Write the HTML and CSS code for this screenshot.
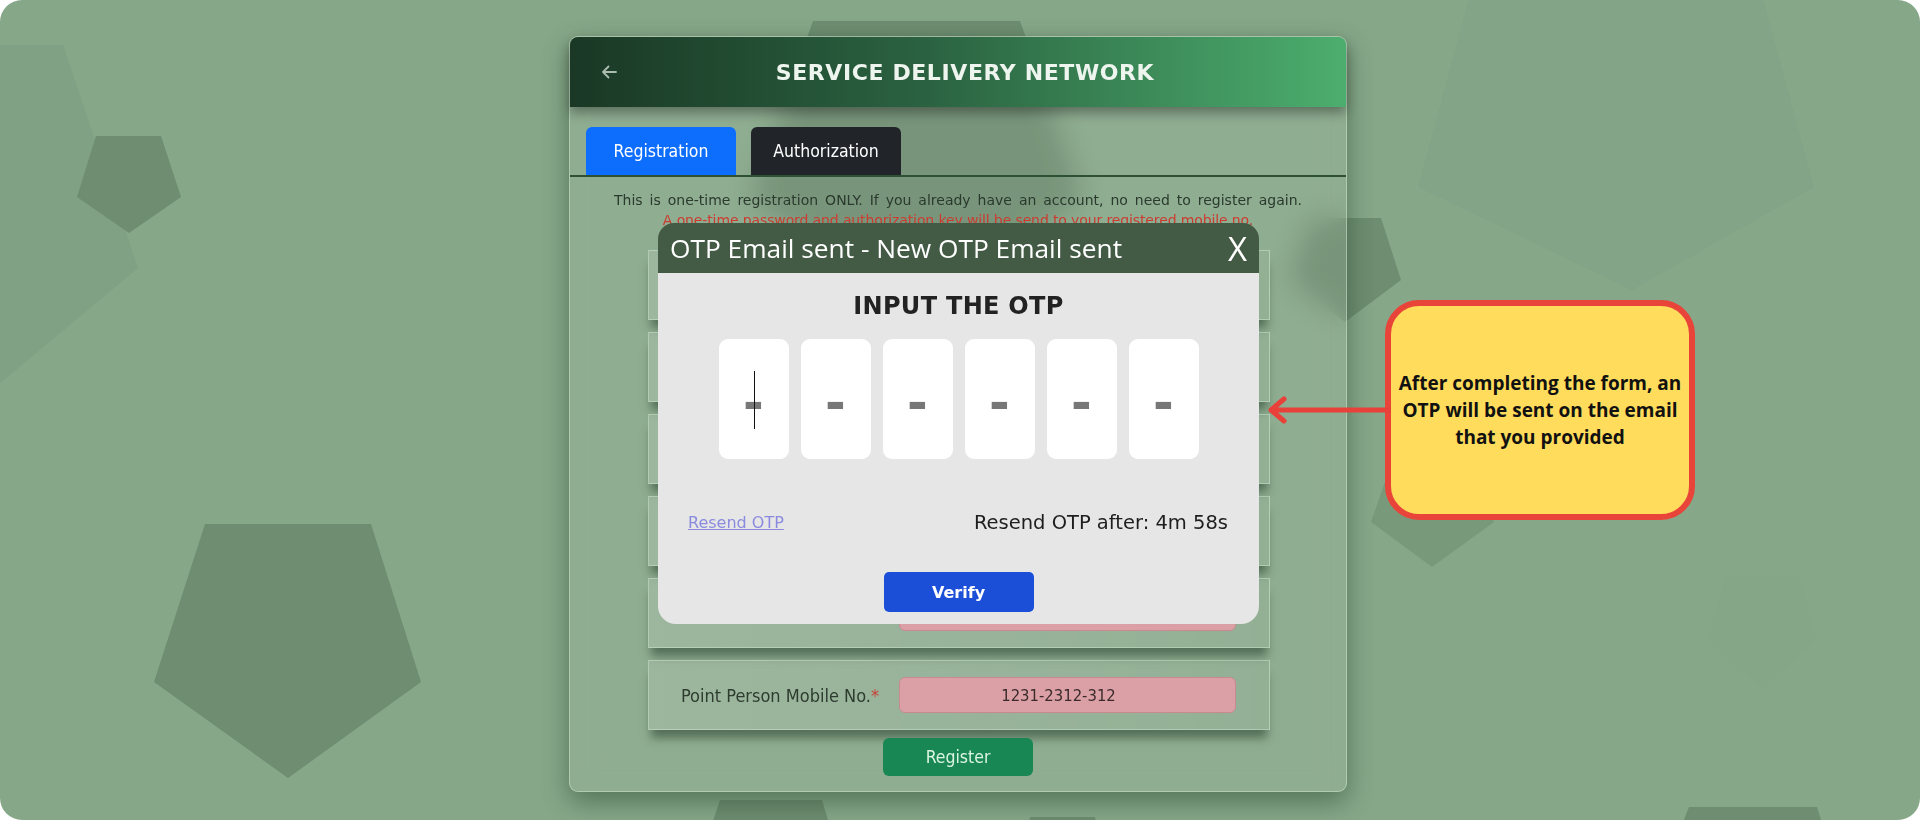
FILE: index.html
```html
<!DOCTYPE html>
<html lang="en">
<head>
<meta charset="utf-8">
<title>Service Delivery Network - OTP</title>
<link rel="stylesheet" href="styles.css">
</head>
<body>
<div class="frame">
  <svg class="bg-shapes" viewBox="0 0 1920 820" aria-hidden="true">
    <polygon class="faint" points="-160,45 63,45 138,268 -20,400 -240,268"/>
    <polygon class="dark" points="96,136 161,136 181,197 129,233 77,197"/>
    <polygon class="dark" points="205,524 371,524 421,682 288,778 154,682"/>
    <polygon class="dark" points="813,21 1020,21 1084,200 916,310 749,200"/>
    <polygon class="dark" points="1311,218 1381,218 1401,280 1345,322 1289,280"/>
    <polygon class="faint2" points="1474,-20 1758,-20 1814,187 1632,290 1418,187"/>
    <polygon class="mid" points="1394,456 1470,456 1494,522 1432,567 1371,522"/>
    <polygon class="faint3" points="1725,577 1800,577 1816,640 1762,690 1708,640"/>
    <polygon class="dark" points="1689,807 1817,807 1840,880 1660,880"/>
    <polygon class="dark" points="1030,817 1095,817 1100,840 1025,840"/>
    <polygon class="dark" points="720,800 822,800 840,860 700,860"/>
  </svg>

  <div class="layout">
    <section class="card">
      <header class="card-head">
        <svg class="back" viewBox="0 0 16 14" aria-hidden="true"><path d="M15 7H2M7.5 1.5 2 7l5.5 5.5"/></svg>
        <h1>SERVICE DELIVERY NETWORK</h1>
      </header>

      <nav class="tabs">
        <button class="tab active">Registration</button>
        <button class="tab dark">Authorization</button>
      </nav>

      <div class="notice">
        <p class="info">This is one-time registration ONLY. If you already have an account, no need to register again.</p>
        <p class="warn">A one-time password and authorization key will be send to your registered mobile no.</p>
      </div>

      <div class="form-panel">
        <div class="row"><label>Organization Name<span class="req">*</span></label><div class="field">Sample Org</div></div>
        <div class="row"><label>Address<span class="req">*</span></label><div class="field">Sample Address</div></div>
        <div class="row"><label>Email Address<span class="req">*</span></label><div class="field">sample@mail.com</div></div>
        <div class="row"><label>Point Person<span class="req">*</span></label><div class="field">Juan Dela Cruz</div></div>
        <div class="row"><label>Position<span class="req">*</span></label><div class="field">Manager</div></div>
        <div class="row"><label>Point Person Mobile No.<span class="req">*</span></label><div class="field">1231-2312-312</div></div>
      </div>

      <div class="actions"><button class="register">Register</button></div>

      <div class="modal">
        <div class="modal-head">
          <span class="modal-title">OTP Email sent - New OTP Email sent</span>
          <span class="close">X</span>
        </div>
        <div class="modal-body">
          <h2>INPUT THE OTP</h2>
          <div class="otp">
            <div class="digit caret">-</div>
            <div class="digit">-</div>
            <div class="digit">-</div>
            <div class="digit">-</div>
            <div class="digit">-</div>
            <div class="digit">-</div>
          </div>
          <div class="resend">
            <a href="#">Resend OTP</a>
            <span>Resend OTP after: 4m 58s</span>
          </div>
          <button class="verify">Verify</button>
        </div>
      </div>
    </section>

    <aside class="callout">
      <p>After completing the form, an<br>OTP will be sent on the email<br>that you provided</p>
    </aside>
  </div>

  <svg class="pointer" viewBox="0 0 130 28" aria-hidden="true">
    <path d="M10 14H128M23 3 10 14l13 11"/>
  </svg>
</div>
</body>
</html>
```

FILE: styles.css
```css
* { box-sizing: border-box; margin: 0; padding: 0; }

html, body {
  width: 1920px;
  height: 820px;
  background: #ffffff;
  overflow: hidden;
}

body {
  font-family: "DejaVu Sans", Verdana, sans-serif;
}

.frame {
  position: relative;
  width: 1920px;
  height: 820px;
  border-radius: 22px;
  background: #87a789;
  overflow: hidden;
}

.bg-shapes {
  position: absolute;
  left: 0;
  top: 0;
  width: 1920px;
  height: 820px;
}
.bg-shapes .dark { fill: #6e8d71; }
.bg-shapes .faint { fill: #80a183; }
.bg-shapes .faint2 { fill: #83a486; }
.bg-shapes .faint3 { fill: #86a688; }
.bg-shapes .mid { fill: #789a7b; }

.layout {
  position: relative;
  display: flex;
  align-items: flex-start;
  padding: 36px 0 0 569px;
}

/* ---------- card ---------- */
.card {
  position: relative;
  width: 778px;
  height: 756px;
  display: flex;
  flex-direction: column;
  border: 1px solid rgba(205, 228, 206, 0.55);
  border-radius: 9px;
  background: rgba(255, 255, 255, 0.07);
  backdrop-filter: blur(14px);
  box-shadow: 0 10px 26px rgba(25, 55, 30, 0.45);
}

.card-head {
  position: relative;
  z-index: 1;
  height: 70px;
  display: flex;
  align-items: center;
  padding: 0 33px 0 31px;
  border-radius: 8px 8px 0 0;
  background: linear-gradient(90deg, #1a3825 0%, #2a6140 45%, #4cae6e 100%);
  box-shadow: 0 6px 12px rgba(0, 0, 0, 0.35);
}

.back {
  width: 16px;
  height: 14px;
  fill: none;
  stroke: #a9bcae;
  stroke-width: 1.8;
  stroke-linecap: round;
  stroke-linejoin: round;
}

.card-head h1 {
  flex: 1;
  text-align: center;
  color: #eef5ee;
  font: bold 22px "DejaVu Sans", Verdana, sans-serif;
  letter-spacing: 0.6px;
}

.tabs {
  display: flex;
  gap: 15px;
  padding: 20px 0 0 16px;
  border-bottom: 2px solid #2e5034;
}

.tab {
  width: 150px;
  height: 48px;
  border: 0;
  border-radius: 6px 6px 0 0;
  color: #ffffff;
  font: 17.5px "DejaVu Sans Condensed", "DejaVu Sans", sans-serif;
}
.tab.active { background: #0d6efd; }
.tab.dark { background: #212529; }

.notice {
  margin-top: 13px;
  text-align: center;
  font: 14px/20px "DejaVu Sans", Verdana, sans-serif;
  color: #2b3a2e;
}
.notice .info { word-spacing: 2.5px; }
.notice .warn { color: #cc3b30; letter-spacing: -0.12px; }

.form-panel {
  margin: 20px 0 0 78px;
  width: 622px;
  display: flex;
  flex-direction: column;
  gap: 12px;
}

.row {
  height: 70px;
  display: flex;
  align-items: center;
  padding-left: 32px;
  background: linear-gradient(90deg, rgba(255, 255, 255, 0.12), rgba(255, 255, 255, 0.04));
  border: 1px solid rgba(215, 235, 215, 0.45);
  box-shadow: 0 11px 9px -3px rgba(25, 50, 30, 0.5);
}

.row label {
  width: 218px;
  font: 18px "DejaVu Sans Condensed", "DejaVu Sans", sans-serif;
  color: #2e3c30;
}
.req { color: #c9413a; }

.field {
  width: 337px;
  height: 36px;
  display: flex;
  align-items: center;
  justify-content: center;
  padding-right: 18px;
  background: #dba0a5;
  border: 1px solid #c8898f;
  border-radius: 6px;
  font: 16.5px "DejaVu Sans Condensed", "DejaVu Sans", sans-serif;
  color: #3a2a2c;
}

.actions {
  display: flex;
  justify-content: center;
  margin-top: 8px;
}

.register {
  width: 150px;
  height: 38px;
  border: 0;
  border-radius: 6px;
  background: #198754;
  color: #dcf5e3;
  font: 17.5px "DejaVu Sans Condensed", "DejaVu Sans", sans-serif;
}

/* ---------- modal ---------- */
.modal {
  position: absolute;
  left: 88px;
  top: 186px;
  width: 601px;
  height: 401px;
  display: flex;
  flex-direction: column;
  z-index: 2;
}

.modal-head {
  height: 50px;
  display: flex;
  align-items: center;
  justify-content: space-between;
  padding: 0 12px 0 12px;
  border-radius: 16px 16px 0 0;
  background: #435b45;
  color: #ffffff;
  font-family: "Open Sans", "Noto Sans", sans-serif;
}
.modal-title { font-size: 26.3px; }
.close { font-size: 33px; line-height: 1; }

.modal-body {
  flex: 1;
  display: flex;
  flex-direction: column;
  align-items: center;
  border-radius: 0 0 18px 18px;
  background: #e6e6e6;
}

.modal-body h2 {
  margin-top: 17px;
  font: bold 24px/32px "DejaVu Sans", Verdana, sans-serif;
  letter-spacing: 0.3px;
  color: #222222;
}

.otp {
  margin-top: 17px;
  display: flex;
  gap: 12px;
}

.digit {
  position: relative;
  width: 70px;
  height: 120px;
  display: flex;
  align-items: center;
  justify-content: center;
  padding-top: 7px;
  border-radius: 9px;
  background: #ffffff;
  color: #777777;
  font: bold 50px/1 "DejaVu Sans", sans-serif;
}

.digit.caret::before {
  content: "";
  position: absolute;
  left: 35px;
  top: 32px;
  width: 1.5px;
  height: 58px;
  background: #111111;
}

.resend {
  align-self: stretch;
  margin-top: 51px;
  height: 24px;
  display: flex;
  align-items: center;
  justify-content: space-between;
  padding: 0 31px 0 30px;
}
.resend a {
  color: #8a8ade;
  font: 16px "DejaVu Sans", sans-serif;
  text-decoration: underline;
}
.resend span {
  color: #1e1e1e;
  font: 19.5px "DejaVu Sans", sans-serif;
}

.verify {
  margin-top: 38px;
  width: 150px;
  height: 40px;
  border: 0;
  border-radius: 5px;
  background: #1c4fd8;
  color: #ffffff;
  font: bold 16px "DejaVu Sans", sans-serif;
}

/* ---------- annotation ---------- */
.callout {
  margin: 264px 0 0 38px;
  width: 310px;
  height: 220px;
  display: flex;
  align-items: center;
  justify-content: center;
  text-align: center;
  border: 6px solid #e8443a;
  border-radius: 34px;
  background: #ffdc5b;
  color: #111111;
  font: 700 19px/27px "Open Sans", Lato, sans-serif;
}

.pointer {
  position: absolute;
  left: 1261px;
  top: 396px;
  width: 130px;
  height: 28px;
  fill: none;
  stroke: #e8413a;
  stroke-width: 5;
  stroke-linecap: round;
  stroke-linejoin: round;
}
```
